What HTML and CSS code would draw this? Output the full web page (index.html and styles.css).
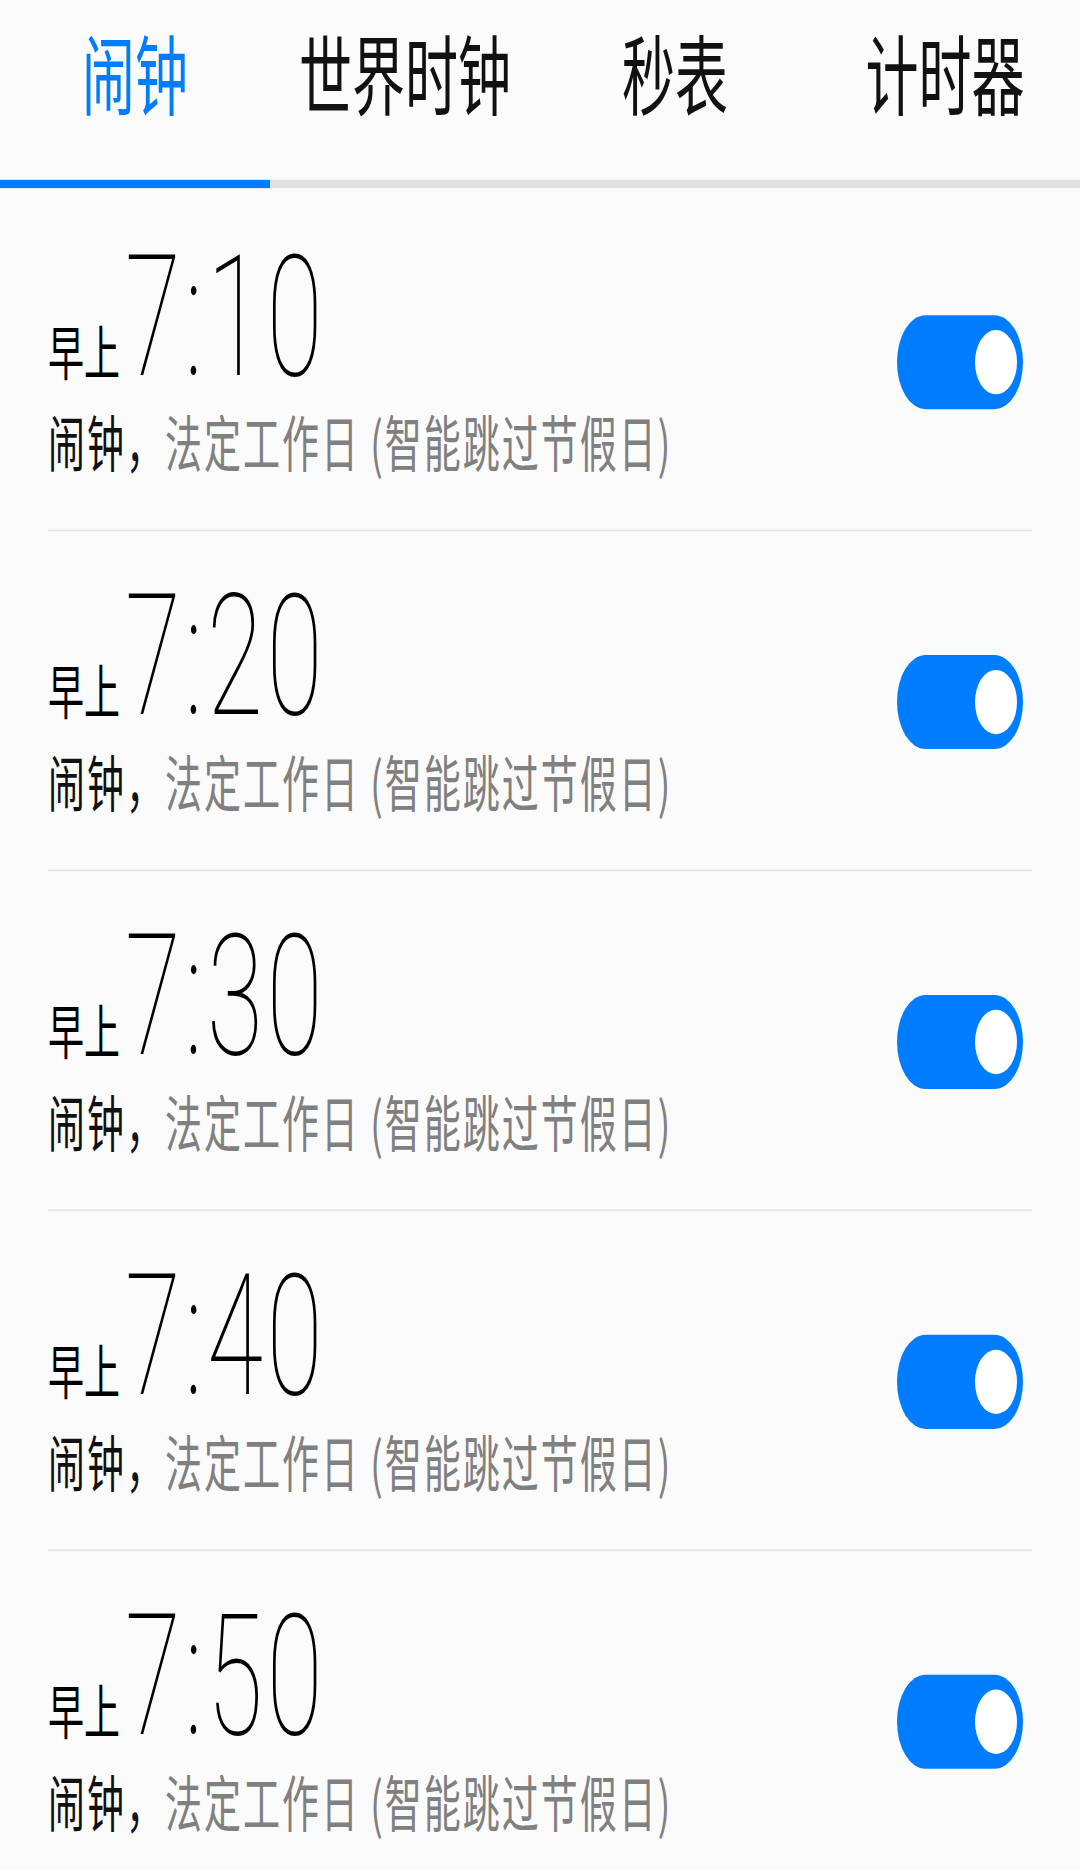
FILE: index.html
```html
<!DOCTYPE html>
<html lang="zh-CN">
<head>
<meta charset="utf-8">
<title>闹钟</title>
<link rel="stylesheet" href="styles.css">
</head>
<body>
<div class="screen">
  <nav class="tabs">
    <div class="tab active">闹钟</div>
    <div class="tab">世界时钟</div>
    <div class="tab">秒表</div>
    <div class="tab">计时器</div>
  </nav>
  <div class="indicator"><div class="indicator-bar"></div></div>
  <ul class="alarms">
    <li class="alarm">
      <div class="alarm-info">
        <div class="time"><span class="ampm">早上</span>7:10</div>
        <div class="desc"><span class="label">闹钟，</span>法定工作日 (智能跳过节假日)</div>
      </div>
      <div class="switch"><div class="switch-thumb"></div></div>
    </li>
    <li class="alarm">
      <div class="alarm-info">
        <div class="time"><span class="ampm">早上</span>7:20</div>
        <div class="desc"><span class="label">闹钟，</span>法定工作日 (智能跳过节假日)</div>
      </div>
      <div class="switch"><div class="switch-thumb"></div></div>
    </li>
    <li class="alarm">
      <div class="alarm-info">
        <div class="time"><span class="ampm">早上</span>7:30</div>
        <div class="desc"><span class="label">闹钟，</span>法定工作日 (智能跳过节假日)</div>
      </div>
      <div class="switch"><div class="switch-thumb"></div></div>
    </li>
    <li class="alarm">
      <div class="alarm-info">
        <div class="time"><span class="ampm">早上</span>7:40</div>
        <div class="desc"><span class="label">闹钟，</span>法定工作日 (智能跳过节假日)</div>
      </div>
      <div class="switch"><div class="switch-thumb"></div></div>
    </li>
    <li class="alarm">
      <div class="alarm-info">
        <div class="time"><span class="ampm">早上</span>7:50</div>
        <div class="desc"><span class="label">闹钟，</span>法定工作日 (智能跳过节假日)</div>
      </div>
      <div class="switch"><div class="switch-thumb"></div></div>
    </li>
  </ul>
</div>
</body>
</html>
```
FILE: styles.css
```css
html, body {
  margin: 0;
  padding: 0;
  background: #fbfbfb;
}

body {
  width: 1080px;
  height: 1870px;
  overflow: hidden;
  font-family: "Noto Sans CJK SC", sans-serif;
}

.screen {
  width: 1080px;
  height: 1134px;
  transform: scaleY(1.65);
  transform-origin: 0 0;
}

.tabs {
  display: grid;
  grid-template-columns: repeat(4, 1fr);
  height: 109px;
}

.tab {
  text-align: center;
  font-size: 53px;
  line-height: 53px;
  padding-top: 17px;
  color: #111;
}

.tab.active {
  color: #007dff;
}

.indicator {
  height: 5px;
  background: #e1e1e1;
}

.indicator-bar {
  width: 270px;
  height: 100%;
  background: #007dff;
}

.alarms {
  list-style: none;
  margin: 2.4px 0 0;
  padding: 0;
}

.alarm {
  display: flex;
  align-items: center;
  justify-content: space-between;
  height: 205px;
  margin: 0 48px;
  border-bottom: 1.5px solid #e4e4e4;
}

.alarm-info {
  align-self: flex-start;
  padding-top: 24.6px;
}

.time {
  font-family: Roboto, "Liberation Sans", sans-serif;
  font-size: 102px;
  line-height: 102px;
  font-weight: 100;
  letter-spacing: 4px;
  color: #000;
  white-space: nowrap;
}

.ampm {
  font-family: "Noto Sans CJK SC", sans-serif;
  font-size: 36px;
  line-height: 1;
  font-weight: 400;
  letter-spacing: 0;
  margin-right: 5px;
}

.desc {
  margin-top: 6px;
  font-size: 37px;
  line-height: 37px;
  letter-spacing: 2px;
  color: #808080;
  white-space: nowrap;
}

.desc .label {
  color: #111;
}

.switch {
  width: 126px;
  height: 57px;
  border-radius: 28.5px;
  background: #007dff;
  display: flex;
  align-items: center;
  justify-content: flex-end;
  padding-right: 6px;
  box-sizing: border-box;
  margin-top: 0.6px;
  margin-right: 9px;
}

.switch-thumb {
  width: 42px;
  height: 39px;
  border-radius: 50%;
  background: #fff;
}
```
